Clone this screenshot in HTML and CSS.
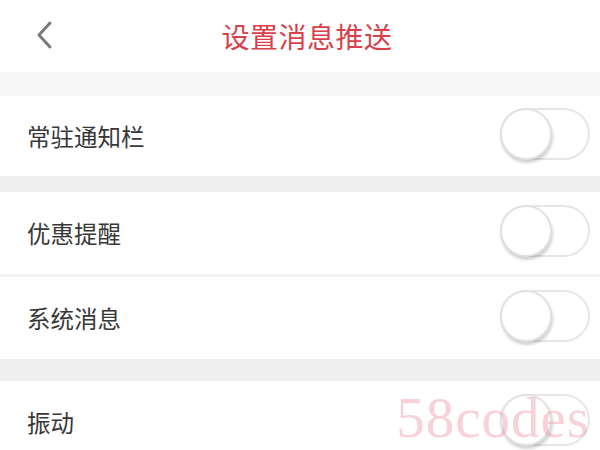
FILE: index.html
```html
<!DOCTYPE html>
<html lang="zh-CN">
<head>
    <meta charset="UTF-8">
    <meta name="viewport" content="width=device-width, initial-scale=1.0">
    <title>设置消息推送</title>
    <link rel="stylesheet" href="styles.css">
</head>
<body>
    <div class="header">
        <svg class="back" width="20" height="30" viewBox="0 0 20 30">
            <path d="M16 3 L5 15 L16 27" fill="none" stroke="#7a7a7a" stroke-width="3" stroke-linecap="round" stroke-linejoin="round"/>
        </svg>
        <h1>设置消息推送</h1>
    </div>

    <div class="gap first"></div>
    <div class="row short">
        <span>常驻通知栏</span>
        <div class="switch"><div class="knob"></div></div>
    </div>

    <div class="gap"></div>
    <div class="row">
        <span>优惠提醒</span>
        <div class="switch"><div class="knob"></div></div>
    </div>
    <div class="line"></div>
    <div class="row">
        <span>系统消息</span>
        <div class="switch"><div class="knob"></div></div>
    </div>

    <div class="gap big"></div>
    <div class="row">
        <span>振动</span>
        <div class="switch"><div class="knob"></div></div>
        <div class="mark">58codes</div>
    </div>
</body>
</html>
```

FILE: styles.css
```css
body {
    margin: 0;
    padding: 0;
    width: 600px;
    height: 450px;
    overflow: hidden;
    background: #fff;
    font-family: "Noto Sans CJK SC", "Noto Sans", sans-serif;
    color: #383838;
}
.header {
    position: relative;
    height: 72px;
    display: flex;
    align-items: center;
    justify-content: center;
}
.back {
    position: absolute;
    left: 34px;
    top: 20px;
}
h1 {
    margin: 0;
    font-size: 28px;
    font-weight: normal;
    color: #d8404c;
    letter-spacing: 0.5px;
    padding-left: 14px;
}
.gap {
    height: 16px;
    background: #efefef;
}
.gap.first {
    height: 24px;
    background: #f7f7f7;
}
.gap.big {
    height: 22px;
}
.line {
    height: 3px;
    background: #f3f3f3;
}
.row {
    position: relative;
    height: 82px;
    display: flex;
    align-items: center;
    justify-content: space-between;
    padding: 0 10px 0 27px;
    background: #fff;
    font-size: 23.5px;
}
.row.short {
    height: 80px;
}
.switch {
    position: relative;
    width: 86px;
    height: 48px;
    border: 2px solid #e6e6e6;
    border-radius: 26px;
    background: #fff;
    margin-top: -4px;
}
.knob {
    position: absolute;
    left: -2px;
    top: -2px;
    width: 48px;
    height: 48px;
    border-radius: 50%;
    border: 2px solid #e2e2e2;
    background: #fff;
    box-shadow: 1px 3px 3px rgba(0, 0, 0, 0.18);
}
.mark {
    position: absolute;
    right: 10px;
    top: 4px;
    font-family: "Liberation Serif", serif;
    font-size: 57px;
    color: rgba(240, 140, 160, 0.4);
    letter-spacing: 1px;
}
```
